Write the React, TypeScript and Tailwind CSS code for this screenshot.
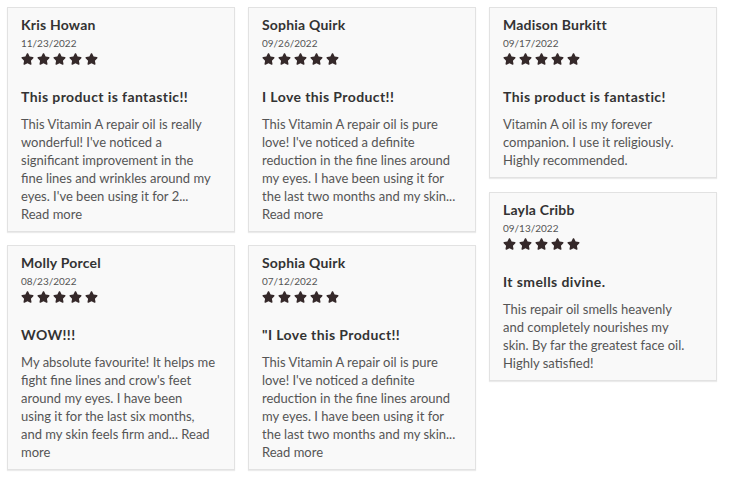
import React from "react";

type Review = {
  name: string;
  date: string;
  title: string;
  lines: string[];
};

const Star = () => (
  <svg width="13" height="12" viewBox="0 0 576 512" className="fill-[#35292a]">
    <path d="M259.3 17.8L194 150.2 47.9 171.5c-26.2 3.8-36.7 36.1-17.7 54.6l105.7 103-25 145.5c-4.5 26.3 23.2 46 46.4 33.7L288 439.6l130.7 68.7c23.2 12.2 50.9-7.4 46.4-33.7l-25-145.5 105.7-103c19-18.5 8.5-50.8-17.7-54.6L382 150.2 316.7 17.8c-11.7-23.6-45.6-23.9-57.4 0z" />
  </svg>
);

const Card = ({ r }: { r: Review }) => (
  <div className="bg-[#f9f9f9] border border-[#e2e2e2] shadow-[0_1px_1px_rgba(0,0,0,0.08)] pl-[13px] pr-[12px] pt-[8px] pb-[8px]">
    <div className="text-[14px] leading-[18px] font-bold tracking-[0.2px] text-[#333]">{r.name}</div>
    <div className="text-[10px] leading-[14px] mt-[2px] text-[#555]">{r.date}</div>
    <div className="flex gap-[3px] mt-[3px] h-[12px]">
      <Star />
      <Star />
      <Star />
      <Star />
      <Star />
    </div>
    <div className="text-[14px] leading-[20px] font-bold tracking-[0.4px] text-[#333] mt-[22px]">{r.title}</div>
    <div className="text-[13px] leading-[18px] text-[#555] mt-[8px]">
      {r.lines.map((l, i) => (
        <div key={i} className="whitespace-nowrap">{l}</div>
      ))}
    </div>
  </div>
);

const col1: Review[] = [
  {
    name: "Kris Howan",
    date: "11/23/2022",
    title: "This product is fantastic!!",
    lines: [
      "This Vitamin A repair oil is really",
      "wonderful! I've noticed a",
      "significant improvement in the",
      "fine lines and wrinkles around my",
      "eyes. I've been using it for 2...",
      "Read more",
    ],
  },
  {
    name: "Molly Porcel",
    date: "08/23/2022",
    title: "WOW!!!",
    lines: [
      "My absolute favourite! It helps me",
      "fight fine lines and crow's feet",
      "around my eyes. I have been",
      "using it for the last six months,",
      "and my skin feels firm and... Read",
      "more",
    ],
  },
];

const col2: Review[] = [
  {
    name: "Sophia Quirk",
    date: "09/26/2022",
    title: "I Love this Product!!",
    lines: [
      "This Vitamin A repair oil is pure",
      "love! I've noticed a definite",
      "reduction in the fine lines around",
      "my eyes. I have been using it for",
      "the last two months and my skin...",
      "Read more",
    ],
  },
  {
    name: "Sophia Quirk",
    date: "07/12/2022",
    title: "\"I Love this Product!!",
    lines: [
      "This Vitamin A repair oil is pure",
      "love! I've noticed a definite",
      "reduction in the fine lines around",
      "my eyes. I have been using it for",
      "the last two months and my skin...",
      "Read more",
    ],
  },
];

const col3: Review[] = [
  {
    name: "Madison Burkitt",
    date: "09/17/2022",
    title: "This product is fantastic!",
    lines: [
      "Vitamin A oil is my forever",
      "companion. I use it religiously.",
      "Highly recommended.",
    ],
  },
  {
    name: "Layla Cribb",
    date: "09/13/2022",
    title: "It smells divine.",
    lines: [
      "This repair oil smells heavenly",
      "and completely nourishes my",
      "skin. By far the greatest face oil.",
      "Highly satisfied!",
    ],
  },
];

const columns = [
  { reviews: col1, gap: "gap-[13px]" },
  { reviews: col2, gap: "gap-[13px]" },
  { reviews: col3, gap: "gap-[14px]" },
];

export default function App() {
  return (
    <div className="w-[731px] h-[481px] bg-white font-['Lato',sans-serif] pl-[7px] pt-[7px]">
      <div className="flex gap-[13px] items-start">
        {columns.map((col, i) => (
          <div key={i} className={`w-[228px] flex flex-col ${col.gap}`}>
            {col.reviews.map((r, j) => (
              <Card key={j} r={r} />
            ))}
          </div>
        ))}
      </div>
    </div>
  );
}
